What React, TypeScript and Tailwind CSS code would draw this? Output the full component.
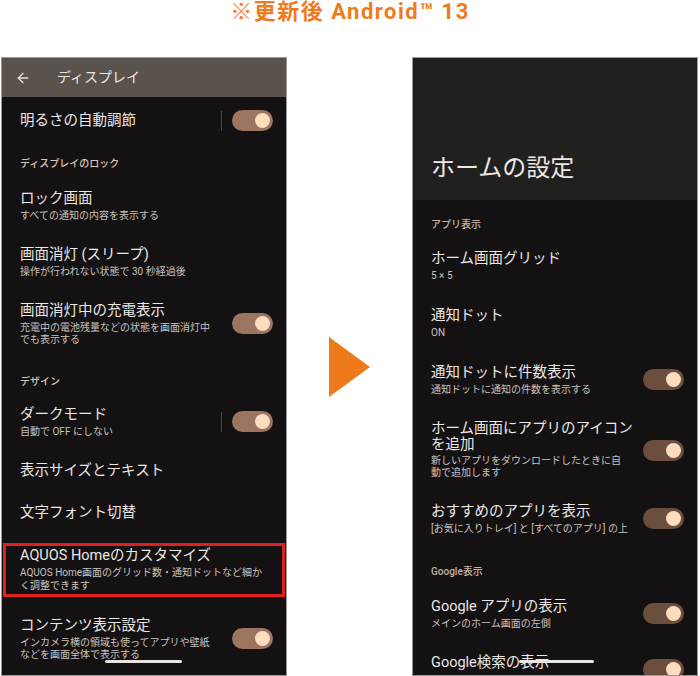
import { ArrowLeft } from 'lucide-react';
import type { ReactNode } from 'react';

const FONT = 'font-["Roboto","Noto_Sans_CJK_JP",sans-serif]';

function Toggle({ dark }: { dark?: boolean }) {
  return (
    <div
      className={`flex items-center justify-end w-[41px] h-[21px] rounded-full pr-[3px] shrink-0 ${
        dark ? 'bg-[#6b4e3e]' : 'bg-[#9b7560]'
      }`}
    >
      <div className="w-[15px] h-[15px] rounded-full bg-[#fddcc0]" />
    </div>
  );
}

interface RowProps {
  title: ReactNode;
  sub?: ReactNode;
  toggle?: boolean;
  divider?: boolean;
  dark?: boolean;
  className?: string;
  titleLh?: string;
}

function Row({ title, sub, toggle, divider, dark, className = '', titleLh = 'leading-[20px]' }: RowProps) {
  return (
    <div className={`flex items-center pl-[18px] pr-[13px] ${className}`}>
      <div className="flex-1 min-w-0">
        <div className={`text-[14.5px] text-[#ebe7e4] ${titleLh}`}>{title}</div>
        {sub && <div className="mt-[1px] text-[10px] leading-[12px] text-[#c9c3bf]">{sub}</div>}
      </div>
      {divider && <div className="w-px h-[20px] bg-[#4a4442] mr-[10px]" />}
      {toggle && <Toggle dark={dark} />}
    </div>
  );
}

function Category({ label, className = '', dark }: { label: string; className?: string; dark?: boolean }) {
  return (
    <div
      className={`pl-[18px] text-[10px] leading-[14px] font-medium ${dark ? 'text-[#c4b4a6]' : 'text-[#dcc6b3]'} ${className}`}
    >
      {label}
    </div>
  );
}

function DisplayPhone() {
  return (
    <div className="relative w-[286px] h-[619px] border border-[#9a9a9a] bg-[#141113] overflow-hidden flex flex-col">
      <div className="h-[39px] bg-[#5a524c] flex items-center pl-[13px] shrink-0">
        <ArrowLeft className="w-[16px] h-[16px] text-[#e4e0dc]" strokeWidth={2} />
        <span className="ml-[26px] text-[14px] text-[#ebe7e4]">ディスプレイ</span>
      </div>
      <Row title="明るさの自動調節" toggle divider className="mt-[13px]" />
      <Category label="ディスプレイのロック" className="mt-[26px]" />
      <Row title="ロック画面" sub="すべての通知の内容を表示する" className="mt-[18px]" />
      <Row title="画面消灯 (スリープ)" sub="操作が行われない状態で 30 秒経過後" className="mt-[23px]" />
      <Row
        title="画面消灯中の充電表示"
        sub={
          <>
            充電中の電池残量などの状態を画面消灯中
            <br />
            でも表示する
          </>
        }
        toggle
        className="mt-[23px]"
      />
      <Category label="デザイン" className="mt-[29px]" />
      <Row title="ダークモード" sub="自動で OFF にしない" toggle divider className="mt-[16px]" />
      <Row title="表示サイズとテキスト" className="mt-[23px]" />
      <Row title="文字フォント切替" className="mt-[22px]" />
      <div className="mt-[20px] mx-[1px] h-[54px] border-[3px] border-[#e0201c] pl-[14px] shrink-0">
        <div className="text-[14.5px] leading-[20px] text-[#ebe7e4]">AQUOS Homeのカスタマイズ</div>
        <div className="text-[10px] leading-[13px] text-[#c9c3bf]">
          AQUOS Home画面のグリッド数・通知ドットなど細か
          <br />
          く調整できます
        </div>
      </div>
      <Row
        title="コンテンツ表示設定"
        sub={
          <>
            インカメラ横の領域も使ってアプリや壁紙
            <br />
            などを画面全体で表示する
          </>
        }
        toggle
        className="mt-[19px]"
      />
      <div className="absolute left-[103px] bottom-[12px] w-[77px] h-[3px] rounded-full bg-[#e8e4e0]" />
    </div>
  );
}

function HomePhone() {
  return (
    <div className="relative w-[286px] h-[619px] border border-[#9a9a9a] bg-[#141113] overflow-hidden flex flex-col">
      <div className="h-[142px] bg-[#221f1f] flex items-end pl-[18px] pb-[16px] shrink-0">
        <span className="text-[24px] leading-[32px] text-[#ebe7e4]">ホームの設定</span>
      </div>
      <Category label="アプリ表示" dark className="mt-[18px]" />
      <Row title="ホーム画面グリッド" sub="5 × 5" className="mt-[17px]" />
      <Row title="通知ドット" sub="ON" className="mt-[24px]" />
      <Row title="通知ドットに件数表示" sub="通知ドットに通知の件数を表示する" toggle dark className="mt-[24px]" />
      <Row
        title={
          <>
            ホーム画面にアプリのアイコン
            <br />
            を追加
          </>
        }
        titleLh="leading-[16px]"
        sub={
          <span className="block mt-[2px]">
            新しいアプリをダウンロードしたときに自
            <br />
            動で追加します
          </span>
        }
        toggle
        dark
        className="mt-[25px]"
      />
      <Row
        title="おすすめのアプリを表示"
        sub="[お気に入りトレイ] と [すべてのアプリ] の上"
        toggle
        dark
        className="mt-[23px]"
      />
      <Category label="Google表示" dark className="mt-[30px]" />
      <Row title="Google アプリの表示" sub="メインのホーム画面の左側" toggle dark className="mt-[18px]" />
      <Row
        title="Google検索の表示"
        sub={<span className="block h-[12px]" />}
        toggle
        dark
        className="mt-[23px]"
      />
      <div className="absolute left-[106px] bottom-[12px] w-[75px] h-[3px] rounded-full bg-[#e8e4e0]" />
    </div>
  );
}

export default function App() {
  return (
    <div className={`w-[700px] h-[676px] bg-white overflow-hidden flex flex-col ${FONT}`}>
      <div className="h-[57px] flex justify-center shrink-0">
        <span className="text-[22px] leading-[24px] font-bold text-[#ee7b1c] tracking-[1.5px]">
          ※更新後 Android™ 13
        </span>
      </div>
      <div className="flex items-center pl-[1px] pr-[2px]">
        <DisplayPhone />
        <div className="flex-1 flex justify-center">
          <svg width="41" height="60" viewBox="0 0 41 60">
            <polygon points="0,0 41,30 0,60" fill="#ee7a1c" />
          </svg>
        </div>
        <HomePhone />
      </div>
    </div>
  );
}
